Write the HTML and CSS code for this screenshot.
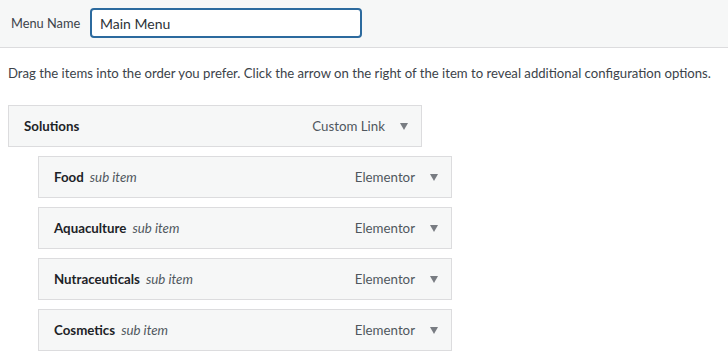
FILE: index.html
```html
<!DOCTYPE html>
<html>
<head>
<meta charset="utf-8">
<link rel="stylesheet" href="styles.css">
</head>
<body>
<div class="header">
  <label class="name-label" for="menu-name">Menu Name</label>
  <input class="name-input" id="menu-name" type="text" value="Main Menu">
</div>
<div class="body">
  <p class="instructions">Drag the items into the order you prefer. Click the arrow on the right of the item to reveal additional configuration options.</p>
  <ul class="menu">
    <li class="item depth-0">
      <span class="title">Solutions</span>
      <span class="type">Custom Link</span>
      <span class="arrow"></span>
    </li>
    <li class="item depth-1">
      <span class="title">Food</span><span class="sub">sub item</span>
      <span class="type">Elementor</span>
      <span class="arrow"></span>
    </li>
    <li class="item depth-1">
      <span class="title">Aquaculture</span><span class="sub">sub item</span>
      <span class="type">Elementor</span>
      <span class="arrow"></span>
    </li>
    <li class="item depth-1">
      <span class="title">Nutraceuticals</span><span class="sub">sub item</span>
      <span class="type">Elementor</span>
      <span class="arrow"></span>
    </li>
    <li class="item depth-1">
      <span class="title">Cosmetics</span><span class="sub">sub item</span>
      <span class="type">Elementor</span>
      <span class="arrow"></span>
    </li>
  </ul>
</div>
</body>
</html>
```

FILE: styles.css
```css
html, body {
  margin: 0;
  padding: 0;
  background: #ffffff;
  font-family: Lato, "Open Sans", sans-serif;
  font-size: 13.3px;
  color: #3c434a;
}
.header {
  box-sizing: border-box;
  background: #f6f7f7;
  border-bottom: 1px solid #dcdcde;
  display: flex;
  align-items: flex-start;
  padding: 8px 0 0 8px;
  height: 48px;
}
.name-label {
  font-size: 12.8px;
  color: #3c434a;
  margin-top: 7px;
  padding-left: 3px;
  width: 82px;
  box-sizing: border-box;
  white-space: nowrap;
}
.name-input {
  width: 272px;
  height: 30px;
  box-sizing: border-box;
  border: 2px solid #2c6a9e;
  border-radius: 4px;
  padding: 0 8px;
  font-family: inherit;
  font-size: 14px;
  color: #2c3338;
  background: #fff;
  outline: none;
}
.body {
  padding: 0 8px;
}
.instructions {
  margin: 15px 0 0 0;
  line-height: 20px;
  font-size: 13.15px;
  color: #3c434a;
  white-space: nowrap;
}
.menu {
  list-style: none;
  margin: 22px 0 0 0;
  padding: 0;
}
.item {
  width: 414px;
  height: 42px;
  box-sizing: border-box;
  border: 1px solid #dcdcde;
  background: #f6f7f7;
  display: flex;
  align-items: center;
  padding: 0 13px 0 15px;
  margin-bottom: 9px;
  white-space: nowrap;
}
.depth-1 {
  margin-left: 30px;
}
.title {
  font-weight: 700;
  color: #1d2327;
}
.sub {
  font-style: italic;
  color: #50575e;
  margin-left: 6px;
}
.type {
  margin-left: auto;
  color: #50575e;
}
.arrow {
  width: 0;
  height: 0;
  border-left: 4px solid transparent;
  border-right: 4px solid transparent;
  border-top: 7px solid #787c82;
  margin-left: 15px;
}
```
